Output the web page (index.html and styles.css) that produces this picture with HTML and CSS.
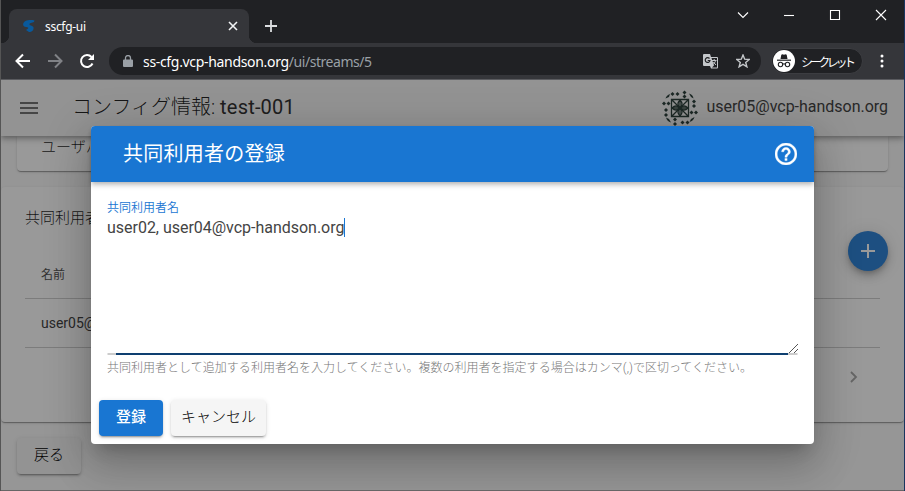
FILE: index.html
```html
<!DOCTYPE html>
<html lang="ja">
<head>
<meta charset="utf-8">
<title>sscfg-ui</title>
<link rel="stylesheet" href="styles.css">
</head>
<body>
<div class="window">
  <header class="tabstrip">
    <div class="tab">
      <svg class="favicon" width="14" height="14" viewBox="0 0 14 14"><path d="M12.500 1.500C10 .8 6 .8 3.500 2 0 4 .5 7.500 4 8c2.500.3 3 1 1.500 2L4 11l3 2c3 0 5-2 4.500-4.500C11 6.500 8 7 7.500 5.500 7.200 4 10 4 12 3z" fill="#09599b"/></svg>
      <span class="tab-title">sscfg-ui</span>
      <svg width="10" height="10" viewBox="0 0 10 10" stroke="#f1f3f4" stroke-width="1.600"><path d="M1 1l8 8M9 1L1 9"/></svg>
    </div>
    <svg class="new-tab" width="12" height="12" viewBox="0 0 12 12" stroke="#dcdee0" stroke-width="1.800"><path d="M6 0v12M0 6h12"/></svg>
    <div class="controls">
      <svg width="12" height="12" viewBox="0 0 12 12"><path d="M1 3.500l5 5 5-5"/></svg>
      <svg width="12" height="12" viewBox="0 0 12 12"><path d="M1 6.500h10"/></svg>
      <svg width="12" height="12" viewBox="0 0 12 12"><path d="M1.500 1.500h9v9h-9z"/></svg>
      <svg width="12" height="12" viewBox="0 0 12 12"><path d="M1 1l10 10M11 1L1 11"/></svg>
    </div>
  </header>
  <nav class="navbar">
    <svg class="nav-icon" width="16" height="16" viewBox="0 0 16 16" stroke="#fff"><path d="M15 8H2M8 1.500L1.500 8 8 14.500"/></svg>
    <svg class="nav-icon" width="16" height="16" viewBox="0 0 16 16" stroke="#808286"><path d="M1 8h13M8 1.500L14.500 8 8 14.500"/></svg>
    <svg class="nav-icon" width="16" height="16" viewBox="0 0 16 16" stroke="#fff"><path d="M13.500 10.500A6 6 0 1 1 12.500 4"/><path d="M15 1v6H9z" fill="#fff" stroke="none"/></svg>
    <div class="address">
      <svg width="10" height="12" viewBox="0 0 10 12"><path d="M1 4.500h8a1 1 0 0 1 1 1V11a1 1 0 0 1-1 1H1a1 1 0 0 1-1-1V5.500a1 1 0 0 1 1-1z" fill="#9aa0a6"/><path d="M2.500 5V3a2.500 2.500 0 0 1 5 0v2" fill="none" stroke="#9aa0a6" stroke-width="1.300"/></svg>
      <span class="url"><b>ss-cfg.vcp-handson.org</b>/ui/streams/5</span>
      <svg width="15" height="15" viewBox="0 0 15 15"><path d="M1 0h6l1 3h6a1 1 0 0 1 1 1v9.500a1 1 0 0 1-1 1H8L7 12H1a1 1 0 0 1-1-1V1a1 1 0 0 1 1-1z" fill="#c4c7ca"/><path d="M8.500 4h5.500v9.500H9l2-2-2.500-7.500z" fill="#202124"/><path d="M6.500 4.500A2.400 2.400 0 1 0 7 6.500H4.700" stroke="#202124" fill="none" stroke-width="1.200"/><path d="M9 6.500h4.500M11.200 5v1.500M12.600 6.500c-.5 2-1.600 3-2.600 4M10.300 8l2.700 3" stroke="#c4c7ca" fill="none"/></svg>
      <svg class="star" width="14" height="14" viewBox="0 0 14 14"><path d="M7 1l1.700 4.200 4.500.3-3.500 2.900 1.200 4.400L7 10.400l-3.900 2.400 1.200-4.400L.8 5.500l4.500-.3z" fill="none" stroke="#c4c7ca" stroke-width="1.400"/></svg>
    </div>
    <div class="incognito">
      <svg width="22" height="22" viewBox="0 0 22 22"><circle cx="11" cy="11" r="11" fill="#fff"/><path d="M7.500 9L8.300 4.800 9.500 4.200l1.500.5 1.500-.5 1.200.6.800 4.200z" fill="#202124"/><path d="M4 10.200h14" stroke="#202124" stroke-width="1.200"/><g fill="none" stroke="#202124" stroke-width="1.100"><circle cx="7.500" cy="14.500" r="2.200"/><circle cx="14.500" cy="14.500" r="2.200"/><path d="M9.700 14.200q1.300-.8 2.600 0"/></g></svg>
      <span>シークレット</span>
    </div>
    <svg class="kebab" width="4" height="14" viewBox="0 0 4 14" fill="#fff"><circle cx="2" cy="2" r="1.500"/><circle cx="2" cy="7" r="1.500"/><circle cx="2" cy="12" r="1.500"/></svg>
  </nav>
  <main class="page">
    <div class="appbar">
      <svg width="18" height="12" viewBox="0 0 18 12" fill="#757575"><path d="M0 0h18v2H0zM0 5h18v2H0zM0 10h18v2H0z"/></svg>
      <h1>コンフィグ情報: <span>test-001</span></h1>
      <svg class="avatar" width="36" height="36" viewBox="0 0 36 36"><g fill="none" stroke="#30443f" stroke-width="1.300"><path d="M9.500 9.500h17v17h-17zM18 9.500v17M9.500 18h17M9.500 9.500l17 17M26.500 9.500l-17 17"/><path d="M18 10q-4 4 0 8 4-4 0-8zM18 26q-4-4 0-8 4 4 0 8zM10 18q4-4 8 0-4 4-8 0zM26 18q-4-4-8 0 4 4 8 0z"/></g><g fill="#30443f"><path d="M22.500.5l2 2-2 2-2-2zM22.500 4.500l2 2-2 2-2-2zM10.500 2l2 2-2 2-2-2zM15.500 2l2 2-2 2-2-2zM27 3.500q4 1 4.500 5L29 7zM32 9.500l2 2-2 2-2-2zM32 14l2 2-2 2-2-2z"/><path d="M34 20.500l2 2-2 2-2-2zM29.500 20.500l2 2-2 2-2-2zM32.500 27q-1 4-5 5l1.500-3zM25.500 30.500l2 2-2 2-2-2zM20.500 30.500l2 2-2 2-2-2zM13 27.500l2 2-2 2-2-2zM13 32l2 2-2 2-2-2zM9 32.500q-4-1-5-5l3 1.500zM4 23l2 2-2 2-2-2zM4 18l2 2-2 2-2-2zM2 11.500l2 2-2 2-2-2zM6.500 11.500l2 2-2 2-2-2zM3.500 8.500q1-3.500 4.500-4.500L7 7z"/></g></svg>
      <span class="account">user05@vcp-handson.org</span>
    </div>
    <div class="content">
      <section class="card detail"><span>ユーザパ</span></section>
      <section class="card members">
        <div class="members-head"><h2>共同利用者</h2>
          <button class="fab"><svg width="16" height="16" viewBox="0 0 16 16"><path d="M8 1v14M1 8h14" stroke="#fff" stroke-width="2"/></svg></button>
        </div>
        <div class="table">
          <div class="row head">名前</div>
          <div class="row">user05@vcp-handson.org</div>
        </div>
        <svg class="next" width="8" height="12" viewBox="0 0 8 12"><path d="M1 1l5 5-5 5" fill="none" stroke="#a8a8a8" stroke-width="1.800"/></svg>
      </section>
      <button class="btn back">戻る</button>
    </div>
    <div class="backdrop"></div>
    <div class="dialog">
      <div class="dialog-head"><h2>共同利用者の登録</h2>
        <svg width="22" height="22" viewBox="2 2 20 20" fill="#fff" stroke="#fff" stroke-width=".35"><path d="M11 18h2v-2h-2v2zm1-16C6.480 2 2 6.480 2 12s4.480 10 10 10 10-4.480 10-10S17.520 2 12 2zm0 18c-4.410 0-8-3.590-8-8s3.590-8 8-8 8 3.590 8 8-3.590 8-8 8zm0-14c-2.210 0-4 1.790-4 4h2c0-1.100.9-2 2-2s2 .9 2 2c0 2-3 1.750-3 5h2c0-2.250 3-2.500 3-5 0-2.210-1.790-4-4-4z"/></svg>
      </div>
      <div class="field">
        <label>共同利用者名</label>
        <div class="input"><span class="value">user02, user04@vcp-handson.org</span><svg class="grip" width="9" height="9" viewBox="0 0 9 9" stroke="#555"><path d="M0 9L9 0M5 9l4-4"/></svg></div>
        <div class="underline"></div>
        <p class="hint">共同利用者として追加する利用者名を入力してください。複数の利用者を指定する場合はカンマ(,)で区切ってください。</p>
      </div>
      <div class="actions"><button class="btn primary">登録</button><button class="btn">キャンセル</button></div>
    </div>
  </main>
</div>
</body>
</html>
```
FILE: styles.css
```css
* { box-sizing: border-box; }
body { margin: 0; background: #555; font-family: Roboto, "Noto Sans CJK JP", sans-serif; color: rgba(0,0,0,.87); }
h1, h2, p { margin: 0; font-weight: 400; }
svg { display: block; flex: none; }
button { border: 0; font: inherit; color: inherit; padding: 0; }
.window { width: 905px; height: 491px; border: solid #19355f; border-width: 0 1px 0 0; border-left: 1px solid #555; display: flex; flex-direction: column; overflow: hidden; }
.tabstrip { height: 43px; flex: none; background: #202124; display: flex; padding-left: 8px; }
.tab { position: relative; width: 240px; height: 34px; margin-top: 9px; background: #35363a; border-radius: 8px 8px 0 0; display: flex; align-items: center; padding: 0 11px 0 13px; }
.tab::before, .tab::after { content: ""; position: absolute; bottom: 0; width: 8px; height: 8px; }
.tab::before { left: -8px; background: radial-gradient(circle at 0 0, transparent 8px, #35363a 8.500px); }
.tab::after { right: -8px; background: radial-gradient(circle at 100% 0, transparent 8px, #35363a 8.500px); }
.tab-title { flex: 1; margin-left: 9px; color: #fff; font: 12px "Noto Sans", sans-serif; letter-spacing: -.3px; }
.new-tab { margin: 20px 0 0 16px; }
.controls { margin: 9px 17px 0 auto; display: flex; gap: 34px; }
.controls svg { fill: none; stroke: #fff; stroke-width: 1.100; }
.navbar { height: 37px; flex: none; background: #35363a; border-bottom: 1px solid #5a5b5f; display: flex; align-items: center; padding-left: 14px; }
.nav-icon { fill: none; stroke-width: 2; margin-right: 16px; }
.address { width: 652px; height: 28px; margin-left: -2px; border-radius: 14px; background: #202124; display: flex; align-items: center; padding: 0 11px 0 14px; }
.url { flex: 1; margin-left: 10px; font: 14px "Noto Sans", sans-serif; color: #9aa0a6; letter-spacing: -.45px; }
.url b { color: #fff; font-weight: 400; letter-spacing: -.32px; }
.star { margin-left: 18px; }
.incognito { width: 92px; height: 26px; margin-left: 10px; border-radius: 13px; background: #202124; border: 1px solid #3c3d41; display: flex; align-items: center; gap: 6px; padding-left: 1px; color: #fff; font: 12px "Noto Sans CJK JP", sans-serif; white-space: nowrap; }
.incognito span { letter-spacing: -3.400px; }
.kebab { margin-left: 17px; }
.page { position: relative; flex: 1; min-height: 0; background: #fafafa; display: flex; flex-direction: column; overflow: hidden; border-bottom: 1px solid #666; }
.appbar { z-index: 1; height: 56px; flex: none; background: #f5f5f5; box-shadow: 0 2px 4px -1px rgba(0,0,0,.2), 0 4px 5px rgba(0,0,0,.14), 0 1px 10px rgba(0,0,0,.12); display: flex; align-items: center; padding: 0 16px 0 19px; }
.appbar h1 { flex: 1; margin: -2px 0 0 34px; font-size: 20px; font-weight: 300; line-height: 28px; }
.appbar h1 span { font-weight: 400; letter-spacing: .2px; color: #333; }
.account { margin: -3px 0 0 8px; font-size: 16px; color: #444; letter-spacing: -.02px; }
.content { flex: 1; min-height: 0; }
.card { background: #fff; border-radius: 4px; box-shadow: 0 2px 1px -1px rgba(0,0,0,.2), 0 1px 1px rgba(0,0,0,.14), 0 1px 3px rgba(0,0,0,.12); }
.detail { margin: 0 16px 0 16px; height: 35px; border-radius: 0 0 4px 4px; padding-left: 24px; overflow: hidden; white-space: nowrap; font-size: 15px; font-weight: 300; line-height: 22px; }
.detail span { display: block; width: 49px; overflow: hidden; }
.members { height: 235px; margin: 16px 0; padding: 20px 24px 0; display: flex; flex-direction: column; }
.members-head { height: 44px; display: flex; justify-content: space-between; }
.members h2 { font-size: 15px; font-weight: 300; line-height: 22px; }
.fab { width: 40px; height: 40px; flex: none; margin: 24px -8px 0 0; border-radius: 50%; background: #3184d8; display: flex; align-items: center; justify-content: center; box-shadow: 0 3px 5px -1px rgba(0,0,0,.2), 0 6px 10px rgba(0,0,0,.14), 0 1px 18px rgba(0,0,0,.12); }
.row { height: 49px; border-bottom: 1px solid #cfcfcf; padding-left: 16px; line-height: 49px; font-size: 14px; color: #444; }
.head { height: 48px; line-height: 48px; font-size: 12px; color: #555; }
.next { margin: 23px 22px 0 auto; }
.btn { height: 36px; border-radius: 4px; background: #f5f5f5; font-size: 15px; font-weight: 300; line-height: 34px; padding-bottom: 2px; color: #000; box-shadow: 0 3px 1px -2px rgba(0,0,0,.2), 0 2px 2px rgba(0,0,0,.14), 0 1px 5px rgba(0,0,0,.12); }
.back { width: 64px; margin-left: 16px; }
.backdrop { position: absolute; z-index: 2; inset: 0; background: rgba(0,0,0,.4); }
.dialog { position: absolute; z-index: 3; left: 90px; top: 46px; width: 723px; height: 318px; border-radius: 4px; background: #fff; box-shadow: 0 11px 15px -7px rgba(0,0,0,.2), 0 24px 38px 3px rgba(0,0,0,.14), 0 9px 46px 8px rgba(0,0,0,.12); }
.dialog-head { height: 56px; border-radius: 4px 4px 0 0; background: #1976d2; color: #fff; display: flex; align-items: center; justify-content: space-between; padding: 0 17px 0 32px; box-shadow: 0 2px 4px -1px rgba(0,0,0,.2), 0 4px 5px rgba(0,0,0,.14); }
.dialog-head h2 { font-size: 20px; line-height: 28px; letter-spacing: .25px; }
.field { padding: 18px 16px 0; height: 218px; }
.field label { display: block; font-size: 12px; line-height: 17px; height: 16px; font-weight: 350; color: #1976d2; }
.input { height: 138px; display: flex; justify-content: space-between; align-items: flex-start; }
.value { font-size: 16px; line-height: 19px; margin-top: 2px; letter-spacing: -.02px; border-right: 1px solid #1976d2; color: #444; }
.grip { align-self: flex-end; margin-bottom: 1px; }
.underline { height: 2px; margin: -1px 10px 0 9px; background: #0e3f70; box-shadow: -9px 0 0 -0.500px #999, 10px 0 0 -0.500px #999; }
.hint { margin-top: 5px; font-size: 12px; line-height: 16px; font-weight: 300; color: #777; white-space: nowrap; letter-spacing: .02px; }
.actions { padding-left: 8px; display: flex; gap: 8px; }
.actions .btn { width: 95px; }
.actions .primary { width: 64px; background: #1976d2; color: #fff; font-weight: 500; }
```
